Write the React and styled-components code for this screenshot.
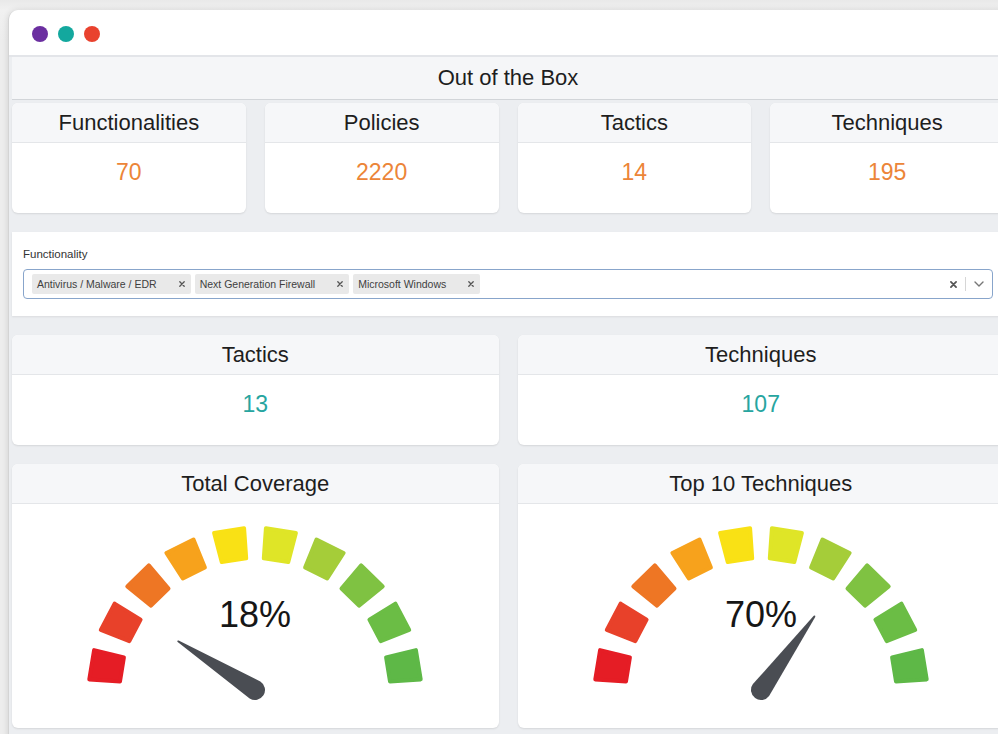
import React from "react";
import styled, { createGlobalStyle } from "styled-components";

const GlobalStyle = createGlobalStyle`
  html, body {
    margin: 0;
    padding: 0;
    background: #ededed;
    overflow: hidden;
  }
  body {
    font-family: "Liberation Sans", Arial, Helvetica, sans-serif;
  }
`;

const Page = styled.div`
  width: 998px;
  height: 734px;
  padding: 10px 0 0 8px;
  box-sizing: border-box;
  background: linear-gradient(180deg, #e9e9e9 0px, #f1f1f1 10px, #ededed 40px);
  overflow: hidden;
`;

const Window = styled.div`
  width: 1010px;
  height: 740px;
  background: #eceef1;
  border-left: 1px solid #d4d4d4;
  border-radius: 10px 0 0 0;
  box-shadow: 0 0 6px rgba(0, 0, 0, 0.12);
  overflow: hidden;
`;

const TitleBar = styled.div`
  height: 47px;
  box-sizing: border-box;
  padding: 2px 0 0 23px;
  background: #ffffff;
  border-bottom: 2px solid #e3e5e9;
  display: flex;
  align-items: center;
  gap: 10px;
`;

const Dot = styled.span`
  width: 16px;
  height: 16px;
  border-radius: 50%;
  background: ${(p) => p.color};
`;

const Content = styled.div`
  padding-left: 3px;
  width: 992px;
`;

const Banner = styled.div`
  height: 42px;
  background: #f5f6f8;
  border-bottom: 1px solid #d2d5d9;
  display: flex;
  align-items: center;
  justify-content: center;
  font-size: 22px;
  color: #1e1e1e;
`;

const Sections = styled.div`
  padding-top: 3px;
  display: flex;
  flex-direction: column;
  gap: 19px;
`;

const CardRow = styled.div`
  display: grid;
  grid-template-columns: repeat(${(p) => p.cols}, 1fr);
  gap: 19px;
`;

const Card = styled.div`
  background: #ffffff;
  border-radius: 6px;
  overflow: hidden;
  box-shadow: 0 1px 2px rgba(0, 0, 0, 0.1);
`;

const CardHeader = styled.div`
  height: 39px;
  background: #f6f7f9;
  border-bottom: 1px solid #e4e6e9;
  display: flex;
  align-items: center;
  justify-content: center;
  font-size: 22px;
  color: #1e1e1e;
`;

const CardValue = styled.div`
  height: 70px;
  box-sizing: border-box;
  padding-top: 16px;
  text-align: center;
  font-size: 23px;
  line-height: 27px;
  color: ${(p) => p.color};
`;

const GaugeBody = styled.div`
  height: 224px;
  display: flex;
  justify-content: center;
`;

const FilterPanel = styled.div`
  height: 84px;
  box-sizing: border-box;
  padding: 15px 11px 0 11px;
  background: #ffffff;
  box-shadow: 0 1px 2px rgba(0, 0, 0, 0.08);
`;

const FilterLabel = styled.div`
  font-size: 11.5px;
  line-height: 14px;
  color: #333333;
  margin-bottom: 8px;
`;

const Select = styled.div`
  height: 30px;
  box-sizing: border-box;
  border: 1px solid #88a5cb;
  border-radius: 4px;
  padding: 4px 8px 4px 8px;
  display: flex;
  align-items: center;
  gap: 4px;
`;

const Chip = styled.div`
  height: 20px;
  padding: 0 6px 0 5px;
  background: #e9e9e9;
  border-radius: 2px;
  display: flex;
  align-items: center;
  gap: 22px;
  font-size: 10.5px;
  color: #3f3f3f;
  white-space: nowrap;
`;

const Spacer = styled.div`
  flex: 1;
`;

const Indicators = styled.div`
  display: flex;
  align-items: center;
  gap: 8px;
`;

const Separator = styled.span`
  width: 1px;
  height: 14px;
  background: #d6d6d6;
`;

const GaugeLabel = styled.text`
  font-family: "Liberation Sans", Arial, sans-serif;
  font-size: 36px;
  fill: #161616;
`;

const SEGMENT_COLORS = [
  "#e51d25",
  "#e8412a",
  "#ee7624",
  "#f7a21c",
  "#f9e115",
  "#dfe527",
  "#a5cd39",
  "#7fc242",
  "#6bbd45",
  "#5eb847",
];

// gauge arc is drawn a touch wider than tall
const CX = 180;
const CY = 186;
const R_OUT = 162;
const R_IN = 132;
const X_STRETCH = 1.025;
const SEG = 10.5;
const STEP = 18;

const segmentPoints = (i) => {
  const start = 180 - 3.75 - i * STEP;
  const end = start - SEG;
  return [
    [R_OUT, start],
    [R_OUT, end],
    [R_IN, end],
    [R_IN, start],
  ]
    .map(([rad, deg]) => {
      const a = (deg * Math.PI) / 180;
      const x = CX + rad * Math.cos(a) * X_STRETCH;
      const y = CY - rad * Math.sin(a);
      return `${x.toFixed(1)},${y.toFixed(1)}`;
    })
    .join(" ");
};

const Gauge = ({ value }) => (
  <svg width="360" height="224" viewBox="0 0 360 224">
    {SEGMENT_COLORS.map((c, i) => (
      <polygon
        key={c}
        points={segmentPoints(i)}
        fill={c}
        stroke={c}
        strokeWidth="4"
        strokeLinejoin="round"
      />
    ))}
    <GaugeLabel x={CX} y={123} textAnchor="middle">
      {value}%
    </GaugeLabel>
    <g transform={`translate(${CX} ${CY}) rotate(${-(180 - value * 1.8)})`}>
      <path
        d="M0 -10 L91 -0.9 Q93 0 91 0.9 L0 10 A10 10 0 0 1 0 -10 Z"
        fill="#4a4d53"
      />
    </g>
  </svg>
);

const SmallX = ({ size = 6, width = 1.3 }) => (
  <svg width={size} height={size} viewBox="0 0 6 6">
    <path d="M0.8 0.8 L5.2 5.2 M5.2 0.8 L0.8 5.2" stroke="#555" strokeWidth={width} strokeLinecap="round" />
  </svg>
);

const Chevron = () => (
  <svg width="10" height="6" viewBox="0 0 10 6">
    <path d="M1 1 L5 5 L9 1" fill="none" stroke="#777" strokeWidth="1.4" strokeLinecap="round" strokeLinejoin="round" />
  </svg>
);

const boxStats = [
  { title: "Functionalities", value: 70 },
  { title: "Policies", value: 2220 },
  { title: "Tactics", value: 14 },
  { title: "Techniques", value: 195 },
];

const selected = ["Antivirus / Malware / EDR", "Next Generation Firewall", "Microsoft Windows"];

const filteredStats = [
  { title: "Tactics", value: 13 },
  { title: "Techniques", value: 107 },
];

const gauges = [
  { title: "Total Coverage", value: 18 },
  { title: "Top 10 Techniques", value: 70 },
];

const App = () => {
  return (
    <>
      <GlobalStyle />
      <Page>
        <Window>
          <TitleBar>
            <Dot color="#6b2fa0" />
            <Dot color="#13a89e" />
            <Dot color="#e9422e" />
          </TitleBar>
          <Content>
            <Banner>Out of the Box</Banner>
            <Sections>
              <CardRow cols={4}>
                {boxStats.map((s) => (
                  <Card key={s.title}>
                    <CardHeader>{s.title}</CardHeader>
                    <CardValue color="#ec8538">{s.value}</CardValue>
                  </Card>
                ))}
              </CardRow>

              <FilterPanel>
                <FilterLabel>Functionality</FilterLabel>
                <Select>
                  {selected.map((item) => (
                    <Chip key={item}>
                      {item}
                      <SmallX />
                    </Chip>
                  ))}
                  <Spacer />
                  <Indicators>
                    <SmallX size={7} width={1.5} />
                    <Separator />
                    <Chevron />
                  </Indicators>
                </Select>
              </FilterPanel>

              <CardRow cols={2}>
                {filteredStats.map((s) => (
                  <Card key={s.title}>
                    <CardHeader>{s.title}</CardHeader>
                    <CardValue color="#27a5a0">{s.value}</CardValue>
                  </Card>
                ))}
              </CardRow>

              <CardRow cols={2}>
                {gauges.map((g) => (
                  <Card key={g.title}>
                    <CardHeader>{g.title}</CardHeader>
                    <GaugeBody>
                      <Gauge value={g.value} />
                    </GaugeBody>
                  </Card>
                ))}
              </CardRow>
            </Sections>
          </Content>
        </Window>
      </Page>
    </>
  );
};

export default App;
